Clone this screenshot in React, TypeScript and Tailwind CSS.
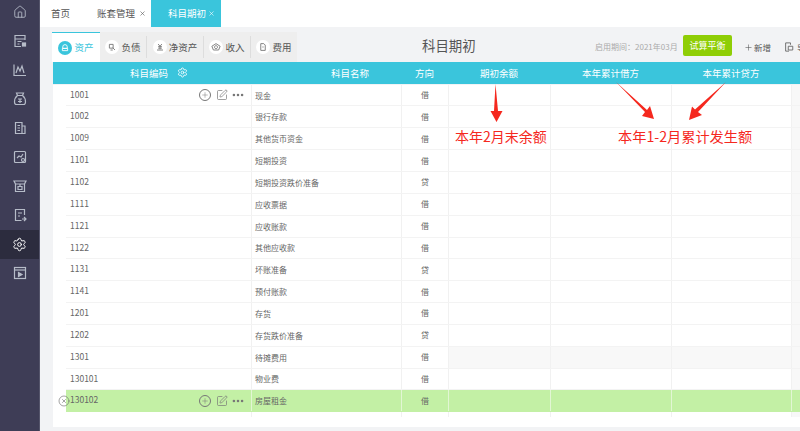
import { ReactNode } from 'react';
import { Plus, SquarePen, Settings, Home, Ellipsis, X, CircleX } from 'lucide-react';

const font = "[font-family:'Noto_Sans_CJK_SC','Liberation_Sans',sans-serif]";

const rows = [
  { code: '1001', name: '现金', dir: '借', tools: true },
  { code: '1002', name: '银行存款', dir: '借' },
  { code: '1009', name: '其他货币资金', dir: '借' },
  { code: '1101', name: '短期投资', dir: '借' },
  { code: '1102', name: '短期投资跌价准备', dir: '贷' },
  { code: '1111', name: '应收票据', dir: '借' },
  { code: '1121', name: '应收账款', dir: '借' },
  { code: '1122', name: '其他应收款', dir: '借' },
  { code: '1131', name: '坏账准备', dir: '贷' },
  { code: '1141', name: '预付账款', dir: '借' },
  { code: '1201', name: '存货', dir: '借' },
  { code: '1202', name: '存货跌价准备', dir: '贷' },
  { code: '1301', name: '待摊费用', dir: '借', shaded: true },
  { code: '130101', name: '物业费', dir: '借' },
  { code: '130102', name: '房屋租金', dir: '借', tools: true, active: true },
];

function Ico({ children, size = 16 }: { children: ReactNode; size?: number }) {
  return (
    <svg width={size} height={size} viewBox="0 0 16 16" fill="none" stroke="currentColor" strokeWidth="1.2">
      {children}
    </svg>
  );
}

const navIcons = [
  <Home key="home" size={14} strokeWidth={1.5} />,
  <Ico key="bill">
    <path d="M13 7V2.500H3v11h6M3 6h10M5.500 8.500h4M5.500 11h2" />
    <rect x="10.500" y="10" width="3" height="3" fill="currentColor" />
  </Ico>,
  <Ico key="chart">
    <path d="M2 2.500v11h12M4 11l2-6 2 4 2-5 2 7" />
  </Ico>,
  <Ico key="bag">
    <path d="M5.500 4.500 4.500 2h7l-1 2.500M5.500 4.500h5c2 1.500 3 4 3 6.500 0 2-1 2.500-2 2.500h-7c-1 0-2-.5-2-2.500 0-2.500 1-5 3-6.500z" />
    <path d="M6 8h4M6 10.500h4M8 8v4" />
  </Ico>,
  <Ico key="doc">
    <path d="M10 13.500H3.500v-11H10zM10 6h3v7.500h-3M5.500 5.500h2.500M5.500 8h2.500M5.500 10.500h2.500" />
  </Ico>,
  <Ico key="report">
    <rect x="2.500" y="2.500" width="11" height="11" rx="1" />
    <path d="M5 9l2-2 2 1 2-3" />
    <circle cx="11" cy="11" r="1.500" />
  </Ico>,
  <Ico key="store">
    <path d="M2 3h12l-1.500 3v7.500h-9V6zM3.500 6h9M6 8.500h4v3H6zM8 6v2.500" />
  </Ico>,
  <Ico key="export">
    <path d="M12.500 8V2.500h-9v11h6M6 6h4M6 9h2M10 12h4M12 10l2 2-2 2" />
  </Ico>,
  <Settings key="gear" size={15} strokeWidth={1.6} />,
  <Ico key="video">
    <rect x="2.500" y="2.500" width="11" height="11" />
    <path d="M2.500 5h11" />
    <path d="M6.500 7.500v4l3.500-2z" fill="currentColor" />
  </Ico>,
];

const subTabs = [
  { label: '资产', w: 'w-[48px]', on: true, icon: <path d="M5 8.500V6.500a3 3 0 0 1 6 0v2zM4.500 8.500h7v3h-7z" /> },
  { label: '负债', w: 'w-[47px]', icon: <path d="M4.500 4.500h5v5h-5zM9 9l3 3M6 12h3" /> },
  { label: '净资产', w: 'w-[57px]', icon: <path d="M5.500 4 8 7l2.500-3M5.500 7.500h5M5.500 9.500h5M8 7v4M4 12h8" /> },
  { label: '收入', w: 'w-[47px]', icon: <path d="M2.500 7 8 3.500 13.500 7l-2 5h-7zM8 6.200a2 2 0 1 0 .01 0" /> },
  { label: '费用', w: 'w-[46px]', last: true, icon: <path d="M5 3.500h4l2 2v7H5zM7.200 8h1.600" /> },
];

function RowTools() {
  return (
    <div className="flex items-center mr-[6px] mt-[2px] text-[#777]">
      <div className="w-[12px] h-[12px] mr-[5px] rounded-full border border-[#777] flex items-center justify-center">
        <Plus size={8} strokeWidth={1.5} />
      </div>
      <SquarePen size={12} strokeWidth={1.4} className="mr-[3px]" />
      <Ellipsis size={14} strokeWidth={2.4} />
    </div>
  );
}

export default function App() {
  return (
    <div className={`relative w-[800px] h-[431px] overflow-hidden flex bg-[#f2f3f5] ${font}`}>
      {/* left nav */}
      <aside className="w-[40px] shrink-0 bg-[#3e3d56] border-r border-[#55556b] flex flex-col items-center text-[#b6bcc8]">
        <div className="w-full -mt-[3px]">
          {navIcons.map((icon, i) => (
            <div
              key={i}
              className={`w-full h-[29.100px] flex items-center justify-center ${i === 8 ? 'bg-[#2c2c3e] text-white' : ''}`}
            >
              {icon}
            </div>
          ))}
        </div>
      </aside>

      <div className="flex-1 min-w-0 flex flex-col">
        {/* page tabs */}
        <div className="h-[27px] shrink-0 bg-white flex items-stretch text-[9.500px] text-[#555]">
          <div className="w-[54px] pl-[11px] flex items-center">首页</div>
          <div className="w-[57px] pl-[3px] flex items-center gap-[4px] shrink-0">
            账套管理 <X size={7} strokeWidth={2} />
          </div>
          <div className="w-[70px] pl-[17px] bg-[#3ac5dc] text-white flex items-center gap-[2px]">
            科目期初 <X size={7} strokeWidth={2} />
          </div>
        </div>

        {/* toolbar */}
        <div className="h-[35px] shrink-0 pt-[5px] pl-[12px] flex items-stretch">
          <div className="flex shrink-0 bg-[#eeeeee] h-[30px]">
            {subTabs.map((t) => (
              <div key={t.label} className={`${t.w} flex items-center py-[4px] ${t.on ? 'bg-white border-t border-[#3ac5dc]' : ''}`}>
                <div
                  className={`w-full h-full flex items-center justify-center gap-[2px] text-[9.500px] ${
                    t.on ? 'text-[#3ac5dc]' : t.last ? 'text-[#555]' : 'text-[#555] border-r border-[#dddddd]'
                  }`}
                >
                  <div
                    className={`w-[14px] h-[14px] rounded-full flex items-center justify-center ${
                      t.on ? 'bg-[#3ac5dc] text-white' : 'bg-white text-[#777]'
                    }`}
                  >
                    <Ico size={12}>{t.icon}</Ico>
                  </div>
                  {t.label}
                </div>
              </div>
            ))}
          </div>
          <div className="w-[298px] shrink-0 pl-[125px] pb-[4px] flex items-center text-[13.400px] text-[#555] whitespace-nowrap">科目期初</div>
          <div className="w-[83px] shrink-0 flex items-center text-[8px] text-[#aaa] whitespace-nowrap">启用期间：2021年03月</div>
          <div className="ml-[5px] mt-[3px] w-[49px] h-[21px] shrink-0 rounded-[2px] bg-[#8fce06] text-white text-[9px] flex items-center justify-center">试算平衡</div>
          <div className="ml-[12px] shrink-0 flex items-center gap-[1px] text-[8.500px] text-[#555] whitespace-nowrap">
            <Plus size={9} strokeWidth={1.5} /> 新增
          </div>
          <div className="ml-[12px] shrink-0 flex items-center gap-[2px] text-[#666] text-[8.500px] whitespace-nowrap">
            <Ico size={12}>
              <path d="M10 5V2.500H3.500v11H8M7 7h6v5H7z" />
            </Ico>
            导入
          </div>
        </div>

        {/* table */}
        <div className="ml-[13px] flex-1 min-h-0 bg-white mb-[4px]">
          <div className="h-[21.600px] bg-[#3ac5dc] text-white text-[9.500px] grid grid-cols-[198px_150px_47px_102px_121px_120px_1fr] items-center text-center">
            <div className="flex items-center justify-center gap-[9px] pl-[14px]">
              科目编码 <Settings size={11} strokeWidth={1.8} />
            </div>
            <div className="pl-[48px]">科目名称</div>
            <div>方向</div>
            <div>期初余额</div>
            <div>本年累计借方</div>
            <div>本年累计贷方</div>
            <div />
          </div>
          <div className="h-px bg-[#f2f3f5]" />
          <div className="pl-[13px]">
            {rows.map((r) => (
              <div
                key={r.code}
                className={`h-[21.850px] grid grid-cols-[185px_150px_47px_102px_121px_120px_1fr] border-b border-[#f3f3f3] text-[#666] ${
                  r.active ? 'bg-[#c3f0a5] border-transparent' : ''
                }`}
              >
                <div className="flex items-center pl-[4px] text-[8.500px] pb-[2px] justify-between">
                  <span>{r.code}</span>
                  {r.tools && <RowTools />}
                </div>
                <div className={`border-l ${r.active ? 'border-[#e2f6d4]' : 'border-[#f1f1f1]'} flex items-center pl-[3px] pt-[1px] text-[8px] overflow-hidden whitespace-nowrap`}>
                  {r.name}
                </div>
                <div className={`border-l ${r.active ? 'border-[#e2f6d4]' : 'border-[#f1f1f1]'} flex items-center justify-center text-[8px]`}>
                  {r.dir}
                </div>
                <div className={`border-l ${r.active ? 'border-[#e2f6d4]' : 'border-[#f1f1f1]'} ${r.shaded ? 'bg-[#f8f8f8]' : ''}`} />
                <div className={`border-l ${r.active ? 'border-[#e2f6d4]' : 'border-[#f1f1f1]'} ${r.shaded ? 'bg-[#f8f8f8]' : ''}`} />
                <div className={`border-l ${r.active ? 'border-[#e2f6d4]' : 'border-[#f1f1f1]'} ${r.shaded ? 'bg-[#f8f8f8]' : ''}`} />
                <div className={`border-l ${r.active ? 'border-[#e2f6d4]' : 'border-[#f1f1f1] bg-[#f8f8f8]'}`} />
              </div>
            ))}
            <div className="h-[5px] grid grid-cols-[185px_150px_47px_102px_121px_120px_1fr]">
              <div />
              <div className="border-l border-[#f1f1f1]" />
              <div className="border-l border-[#f1f1f1]" />
              <div className="border-l border-[#f1f1f1]" />
              <div className="border-l border-[#f1f1f1]" />
              <div className="border-l border-[#f1f1f1]" />
              <div className="border-l border-[#f1f1f1] bg-[#f8f8f8]" />
            </div>
          </div>
        </div>
      </div>

      {/* delete button on the active row */}
      <CircleX size={12} strokeWidth={1.2} className="absolute left-[58px] top-[395px] text-[#666]" />

      {/* red annotations pasted over the table */}
      <svg className="absolute left-0 top-0 pointer-events-none" width="800" height="431" fill="#f5281e">
        <path d="M495.500 84 L498 111 L502.500 111 L496.500 122 L490.500 111 L494 111 Z" />
        <path d="M616 82 L647 110 L650 106 L654 119 L642 116 L645 112 Z" />
        <path d="M726 82 L698 112 L702 115 L689 120 L692 106.500 L695 109.500 Z" />
      </svg>
      <div className="absolute left-[455px] top-[124px] text-[14px] leading-[24px] text-[#f5281e] whitespace-nowrap">本年2月末余额</div>
      <div className="absolute left-[618px] top-[124px] text-[14.200px] leading-[24px] text-[#f5281e] whitespace-nowrap">本年1-2月累计发生额</div>
    </div>
  );
}
